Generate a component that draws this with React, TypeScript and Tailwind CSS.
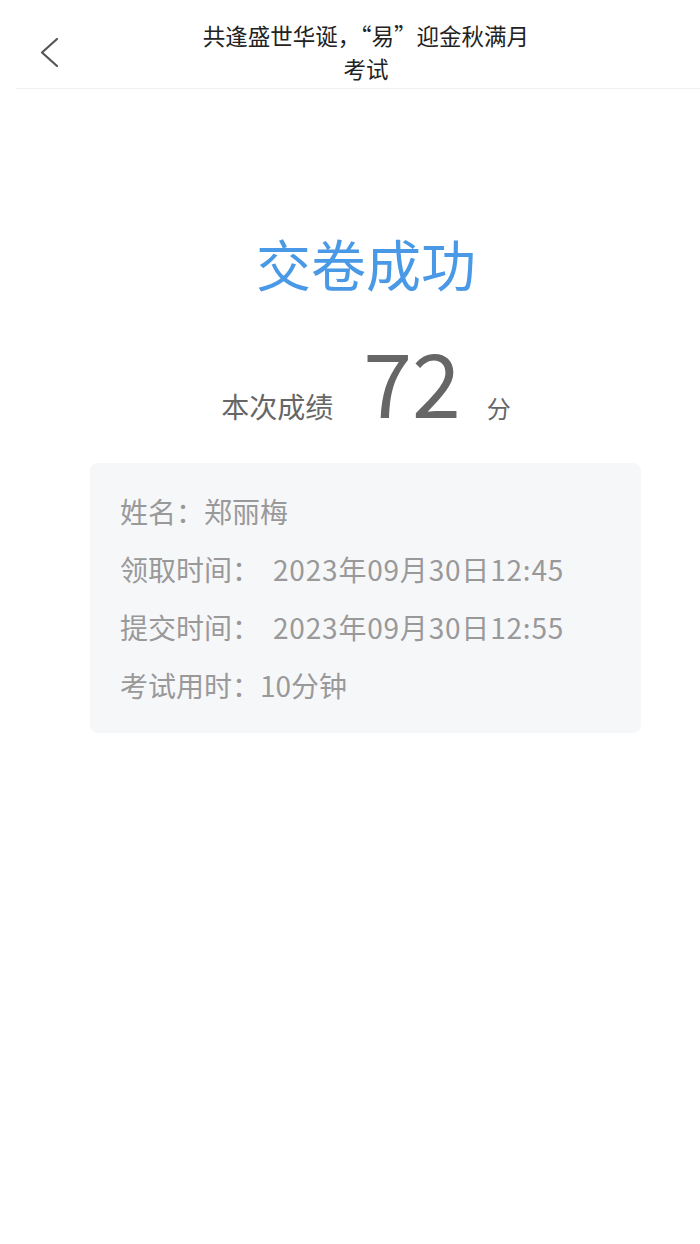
const rows = [
  { label: "姓名：", value: "郑丽梅", gap: "ml-0" },
  { label: "领取时间：", value: "2023年09月30日12:45", gap: "ml-[13px] tracking-[0.8px]" },
  { label: "提交时间：", value: "2023年09月30日12:55", gap: "ml-[13px] tracking-[0.8px]" },
  { label: "考试用时：", value: "10分钟", gap: "ml-0" },
];

export default function App() {
  return (
    <div className="min-h-[1244px] bg-white font-['Noto_Sans_CJK_SC',sans-serif]">
      {/* header */}
      <div className="relative ml-4 flex h-[89px] flex-col items-center justify-center border-b border-[#f0f0f0] pl-[16px]">
        <button className="absolute left-[22px] top-[36px] text-[#555]">
          <svg width="24" height="32" viewBox="0 0 24 32" fill="none">
            <polyline points="19,3 4,16.5 19,30" stroke="currentColor" strokeWidth="2.2" strokeLinecap="round" strokeLinejoin="round" />
          </svg>
        </button>
        <div className="mt-[16px] text-center text-[22.5px] leading-[33px] text-[#222]">
          <div>共逢盛世华诞，“易”迎金秋满月</div>
          <div>考试</div>
        </div>
      </div>

      <div className="flex flex-col items-center pl-[32px]">
        <h1 className="mt-[140px] text-[55px] leading-[66px] text-[#4a99e6]">交卷成功</h1>

        <div className="mt-[40px] flex items-baseline text-[#666]">
          <span className="text-[28px]">本次成绩</span>
          <span className="ml-[30px] text-[88px] leading-[90px]">72</span>
          <span className="ml-[26px] text-[24px]">分</span>
        </div>
      </div>

      <div className="ml-[90px] mt-[36px] flex w-[551px] flex-col gap-[22px] rounded-lg bg-[#f6f7f9] px-[30px] pb-[30px] pt-[30px] text-[28px] leading-[36px] text-[#999]">
        {rows.map((r) => (
          <div key={r.label} className="flex">
            <span>{r.label}</span>
            <span className={r.gap}>{r.value}</span>
          </div>
        ))}
      </div>
    </div>
  );
}
